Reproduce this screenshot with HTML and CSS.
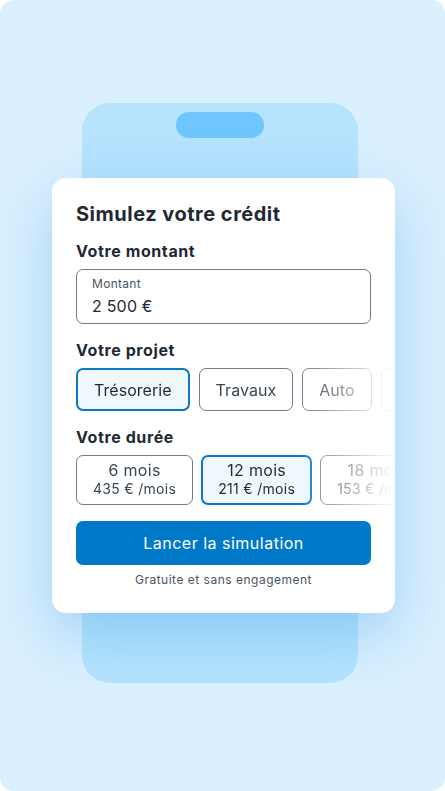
FILE: index.html
```html
<!DOCTYPE html>
<html lang="fr">
<head>
  <meta charset="UTF-8" />
  <title>Simulez votre crédit</title>
  <link rel="stylesheet" href="styles.css">
</head>
<body>

  <div class="stage">
    <div class="phone">
      <div class="notch"></div>
    </div>

    <div class="card">
      <h1>Simulez votre crédit</h1>

      <h2>Votre montant</h2>
      <div class="field">
        <span class="field-label">Montant</span>
        <span class="field-value">2 500 €</span>
      </div>

      <h2>Votre projet</h2>
      <div class="scroller">
        <button class="chip selected">Trésorerie</button>
        <button class="chip">Travaux</button>
        <button class="chip">Auto</button>
        <button class="chip">Moto</button>
      </div>

      <h2>Votre durée</h2>
      <div class="scroller durees">
        <button class="duree">
          <span class="mois">6 mois</span>
          <span class="prix">435 € /mois</span>
        </button>
        <button class="duree selected">
          <span class="mois">12 mois</span>
          <span class="prix">211 € /mois</span>
        </button>
        <button class="duree">
          <span class="mois">18 mois</span>
          <span class="prix">153 € /mois</span>
        </button>
      </div>

      <button class="cta">Lancer la simulation</button>
      <p class="note">Gratuite et sans engagement</p>
    </div>
  </div>

</body>
</html>
```

FILE: styles.css
```css
body {
  margin: 0;
  font-family: Inter, "Noto Sans", sans-serif;
  background-color: white;
}
.stage {
  width: 445px;
  height: 791px;
  background-color: #dbf0fe;
  border-radius: 14px;
  overflow: hidden;
  display: grid;
  grid-template-columns: 1fr;
  grid-template-rows: 1fr;
}
.phone {
  grid-area: 1 / 1;
  align-self: start;
  justify-self: start;
  margin: 103px 0 0 82px;
  width: 276px;
  height: 580px;
  background-color: #b6e3fd;
  border-radius: 28px;
  display: flex;
  justify-content: center;
}
.notch {
  margin-top: 9px;
  width: 88px;
  height: 26px;
  border-radius: 13px;
  background-color: #6fc6fe;
}
.card {
  grid-area: 1 / 1;
  align-self: start;
  justify-self: start;
  margin: 178px 0 0 52px;
  width: 343px;
  box-sizing: border-box;
  padding: 22px 24px 25px;
  background-color: white;
  border-radius: 14px;
  overflow: hidden;
  box-shadow: 0 22px 60px rgba(60, 160, 235, 0.38);
  color: #1f2933;
}
h1 {
  font-size: 20px;
  line-height: 28px;
  font-weight: 700;
  margin: 0 0 11px;
  letter-spacing: 0.5px;
}
h2 {
  font-size: 16px;
  line-height: 24px;
  font-weight: 700;
  margin: 0 0 6px;
  letter-spacing: 0.6px;
}
.field {
  display: flex;
  flex-direction: column;
  gap: 2px;
  border: 1px solid #6e7c8c;
  border-radius: 7px;
  padding: 6px 15px 5px;
  margin-bottom: 14px;
}
.field-label {
  font-size: 12px;
  line-height: 16px;
  color: #4a5563;
  letter-spacing: 0.3px;
}
.field-value {
  font-size: 16px;
  line-height: 24px;
  color: #1f2933;
  letter-spacing: 0.2px;
}
.scroller {
  display: flex;
  gap: 9px;
  margin-right: -24px;
  margin-bottom: 14px;
  overflow: hidden;
  -webkit-mask-image: linear-gradient(to right, black 70%, transparent 100%);
  mask-image: linear-gradient(to right, black 70%, transparent 100%);
}
.durees {
  gap: 8px;
  margin-bottom: 16px;
}
button {
  font-family: inherit;
  cursor: pointer;
}
.chip {
  flex-shrink: 0;
  height: 43px;
  padding: 0 16px;
  border: 1px solid #6e7c8c;
  border-radius: 7px;
  background-color: white;
  color: #3b4654;
  font-size: 16px;
  letter-spacing: 0.05px;
}
.chip.selected,
.duree.selected {
  border: 2px solid #0a77c7;
  background-color: #eff7ff;
  color: #1f2933;
}
.duree {
  flex-shrink: 0;
  display: flex;
  flex-direction: column;
  align-items: center;
  height: 50px;
  box-sizing: border-box;
  padding: 5px 16px 0;
  border: 1px solid #6e7c8c;
  border-radius: 7px;
  background-color: white;
  color: #3b4654;
  letter-spacing: 0.3px;
}
.duree.selected {
  padding: 4px 15px 0;
}
.mois {
  font-size: 16px;
  line-height: 19px;
}
.prix {
  font-size: 14px;
  line-height: 17px;
}
.cta {
  display: block;
  width: 100%;
  height: 44px;
  margin: 0;
  border: none;
  border-radius: 7px;
  background-color: #0079c8;
  color: white;
  font-size: 16px;
  letter-spacing: 0.5px;
}
.note {
  margin: 7px 0 0;
  text-align: center;
  font-size: 12px;
  line-height: 16px;
  color: #4a5563;
  letter-spacing: 0.5px;
}
```
